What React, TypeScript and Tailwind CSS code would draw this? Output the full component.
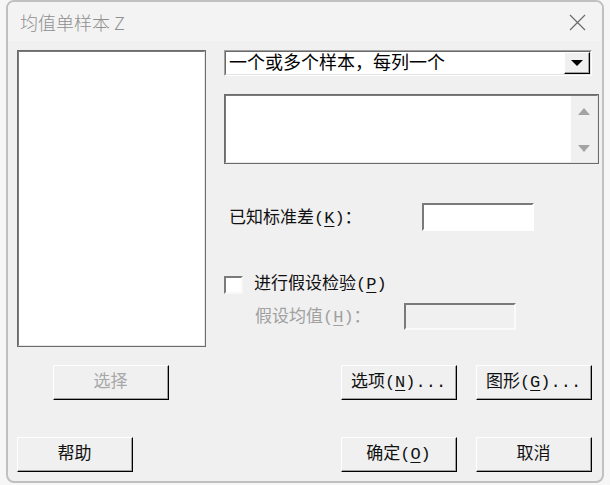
import React from 'react';

const dlgFont = { fontFamily: '"Liberation Mono", "Noto Sans CJK SC", monospace' };

function U({ c }: { c: string }) {
  return <span className="underline underline-offset-[3px] decoration-1">{c}</span>;
}

function Btn({ children, disabled }: { children: React.ReactNode; disabled?: boolean }) {
  return (
    <div className="h-[35px] w-[116px] shrink-0 border border-t-white border-l-white border-r-black border-b-black">
      <div
        className={`h-full w-full border-r border-b border-r-[#a0a0a0] border-b-[#a0a0a0] flex items-center justify-center pt-[2px] text-[17px] ${
          disabled ? 'text-[#a8a8a8]' : 'text-[#111]'
        }`}
      >
        {children}
      </div>
    </div>
  );
}

// sunken white field
function Sunken({ className, children, bg = 'bg-white' }: { className: string; children?: React.ReactNode; bg?: string }) {
  return (
    <div className={`${className} border border-t-[#a0a0a0] border-l-[#a0a0a0] border-r-white border-b-white`}>
      <div className={`h-full w-full border border-t-[#696969] border-l-[#696969] border-r-[#e3e3e3] border-b-[#e3e3e3] ${bg}`}>
        {children}
      </div>
    </div>
  );
}

export default function App() {
  return (
    <div className="w-[610px] h-[485px] bg-[#f6f6f6] px-[6px] overflow-hidden" style={dlgFont}>
      <div className="h-[483px] rounded-[8px] border-2 border-[#c0c0c0] bg-[#f0f0f0] overflow-hidden flex flex-col">
        {/* title bar */}
        <div className="h-[39px] shrink-0 bg-[#f3f3f3] flex items-center justify-between pl-[12px] pr-[16px]">
          <span
            className="text-[18px] text-[#8f8f8f] pt-[1px] font-light"
            style={{ fontFamily: '"Noto Sans CJK SC", "Noto Sans", sans-serif' }}
          >
            均值单样本 Z
          </span>
          <svg width="17" height="17" viewBox="0 0 17 17" className="mt-[1px]">
            <path d="M1 1 L16 16 M16 1 L1 16" stroke="#6b6b6b" strokeWidth="1.2" fill="none" />
          </svg>
        </div>

        {/* body */}
        <div className="flex-1 pl-[9px] pt-[9px]">
          <div className="flex items-start">
            {/* variable list */}
            <div className="w-[189px] h-[297px] border border-[#6b6b6b]">
              <div className="h-full w-full border border-t-[#7a7a7a] border-l-[#7a7a7a] border-r-[#e6e6e6] border-b-[#e6e6e6] bg-white" />
            </div>

            {/* right column */}
            <div className="ml-[18px] w-[375px] flex flex-col">
              {/* combobox */}
              <Sunken className="w-[368px] h-[26px]">
                <div className="flex h-full items-center">
                  <span className="flex-1 pl-[3px] pt-[2px] text-[18px] text-black leading-none">一个或多个样本，每列一个</span>
                  <div className="h-[22px] w-[26px] border border-t-white border-l-white border-r-black border-b-black">
                    <div className="h-full w-full bg-[#f0f0f0] border-r border-b border-r-[#a0a0a0] border-b-[#a0a0a0] flex items-center justify-center">
                      <svg width="12" height="6" viewBox="0 0 12 6">
                        <path d="M0 0 H12 L6 6 Z" fill="#000" />
                      </svg>
                    </div>
                  </div>
                </div>
              </Sunken>

              {/* variables field */}
              <div className="mt-[18px] h-[70px] w-[375px] border border-[#6b6b6b]">
                <div className="h-full w-full border border-t-[#7a7a7a] border-l-[#7a7a7a] border-r-[#e6e6e6] border-b-[#e6e6e6] bg-white flex">
                  <div className="flex-1" />
                  <div className="w-[26px] bg-[#f0f0f0] flex flex-col items-center justify-between pt-[12px] pb-[10px]">
                    <svg width="12" height="7" viewBox="0 0 12 7">
                      <path d="M0 7 H12 L6 0 Z" fill="#a3a3a3" />
                    </svg>
                    <svg width="12" height="7" viewBox="0 0 12 7">
                      <path d="M0 0 H12 L6 7 Z" fill="#a3a3a3" />
                    </svg>
                  </div>
                </div>
              </div>

              {/* known std dev */}
              <div className="mt-[39px] h-[28px] flex items-center">
                <span className="w-[198px] pl-[5px] pt-[3px] text-[17px] text-[#111]">
                  已知标准差(<U c="K" />)：
                </span>
                <div className="w-[112px] h-[28px] border-2 border-t-[#7a7a7a] border-l-[#7a7a7a] border-r-white border-b-white bg-white" />
              </div>

              {/* hypothesis checkbox */}
              <div className="mt-[43px] h-[20px] flex items-center">
                <div className="w-[19px] h-[18px] mt-[2px] border-2 border-t-[#7a7a7a] border-l-[#7a7a7a] border-r-[#f8f8f8] border-b-[#f8f8f8] bg-white" />
                <span className="ml-[11px] pt-[2px] text-[17px] text-[#111]">
                  进行假设检验(<U c="P" />)
                </span>
              </div>

              {/* hypothesized mean */}
              <div className="mt-[9px] h-[27px] flex items-center">
                <span className="w-[180px] pl-[31px] pt-[2px] text-[17px] text-[#a0a0a0]">
                  假设均值(<U c="H" />)：
                </span>
                <div className="w-[112px] h-[27px] border-2 border-t-[#7a7a7a] border-l-[#7a7a7a] border-r-[#fafafa] border-b-[#fafafa] bg-[#f0f0f0]" />
              </div>
            </div>
          </div>

          {/* button row 1 */}
          <div className="mt-[18px] flex">
            <div className="ml-[36px]">
              <Btn disabled>选择</Btn>
            </div>
            <div className="ml-[172px]">
              <Btn>
                选项(<U c="N" />)...
              </Btn>
            </div>
            <div className="ml-[19px]">
              <Btn>
                图形(<U c="G" />)...
              </Btn>
            </div>
          </div>

          {/* button row 2 */}
          <div className="mt-[37px] flex">
            <Btn>帮助</Btn>
            <div className="ml-[208px]">
              <Btn>
                确定(<U c="O" />)
              </Btn>
            </div>
            <div className="ml-[19px]">
              <Btn>取消</Btn>
            </div>
          </div>
        </div>
      </div>
    </div>
  );
}
